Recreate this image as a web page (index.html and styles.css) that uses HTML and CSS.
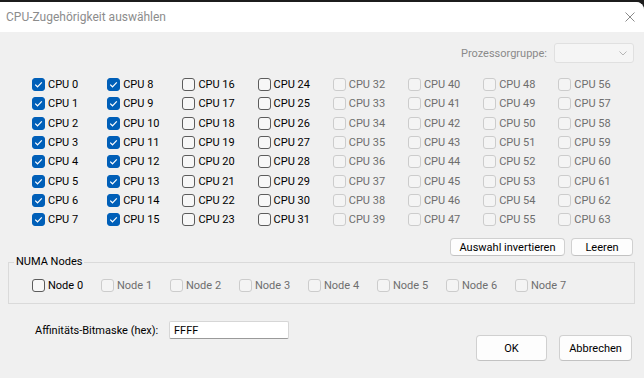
FILE: index.html
```html
<!DOCTYPE html>
<html lang="de">
  <head>
    <meta charset="UTF-8" />
    <title>CPU-Zugehörigkeit auswählen</title>
    <link rel="stylesheet" href="styles.css">
  </head>
  <body>
    <div class="dialog">
      <div class="titlebar">
        <span class="title">CPU-Zugehörigkeit auswählen</span>
        <svg class="close" width="10" height="10" viewBox="0 0 10 10">
          <path d="M0.5 0.5 L9.5 9.5 M9.5 0.5 L0.5 9.5" stroke="#8a8a8a" stroke-width="1" fill="none" />
        </svg>
      </div>

      <div class="content">
        <div class="group-row">
          <span class="muted">Prozessorgruppe:</span>
          <div class="select">
            <svg width="8" height="5" viewBox="0 0 8 5">
              <path d="M0.5 0.5 L4 4 L7.5 0.5" stroke="#b5b5b5" stroke-width="1" fill="none" />
            </svg>
          </div>
        </div>

        <div class="cpu-grid" id="cpu-grid"></div>

        <div class="actions">
          <button class="btn btn-invert">Auswahl invertieren</button>
          <button class="btn btn-clear">Leeren</button>
        </div>

        <fieldset class="numa">
          <legend>NUMA Nodes</legend>
          <div class="nodes" id="nodes"></div>
        </fieldset>

        <div class="bottom">
          <div class="mask">
            <label for="mask-input">Affinitäts-Bitmaske (hex):</label>
            <input type="text" id="mask-input" value="FFFF" />
          </div>
          <div class="dlg-buttons">
            <button class="btn btn-dlg">OK</button>
            <button class="btn btn-dlg btn-cancel">Abbrechen</button>
          </div>
        </div>
      </div>
    </div>

    <script>
      const checkSvg =
        '<svg width="13" height="13" viewBox="0 0 13 13"><path d="M3.2 6.6 L5.5 8.8 L9.8 4.3" stroke="#fff" stroke-width="1.2" fill="none" /></svg>';

      function checkbox(text, state) {
        const inner = state === "checked" ? checkSvg : "";
        return `<label class="cb ${state}"><span class="box">${inner}</span>${text}</label>`;
      }

      const grid = document.getElementById("cpu-grid");
      let html = "";
      for (let i = 0; i < 64; i++) {
        let state = "off";
        if (i < 16) state = "checked";
        else if (i >= 32) state = "disabled";
        html += checkbox("CPU " + i, state);
      }
      grid.innerHTML = html;

      const nodes = document.getElementById("nodes");
      let nodeHtml = "";
      for (let i = 0; i < 8; i++) {
        nodeHtml += checkbox("Node " + i, i === 0 ? "off" : "disabled");
      }
      nodes.innerHTML = nodeHtml;
    </script>
  </body>
</html>
```

FILE: styles.css
```css
* {
  margin: 0;
  padding: 0;
  box-sizing: border-box;
}

body {
  width: 644px;
  height: 378px;
  overflow: hidden;
  background-color: #1c1c1c;
  font-family: Roboto, "Liberation Sans", sans-serif;
  font-size: 11px;
  color: #000;
}

.dialog {
  margin-top: 2px;
  height: 376px;
  background-color: #f0f0f0;
  border-top-right-radius: 8px;
  overflow: hidden;
}

.titlebar {
  height: 30px;
  background-color: #fff;
  display: flex;
  align-items: center;
  justify-content: space-between;
  padding: 0 9px 0 6px;
}

.title {
  font-size: 12px;
  color: #8c8c8c;
}

.close {
  display: block;
}

.group-row {
  display: flex;
  justify-content: flex-end;
  align-items: center;
  gap: 7px;
  margin-top: 11px;
  padding-right: 10px;
}

.muted {
  color: #8a8a8a;
}

.select {
  width: 80px;
  height: 20px;
  background-color: #f5f5f5;
  border: 1px solid #e0e0e0;
  border-radius: 3px;
  display: flex;
  justify-content: flex-end;
  align-items: center;
  padding-right: 6px;
}

.select svg {
  display: block;
}

.cpu-grid {
  display: grid;
  grid-auto-flow: column;
  grid-template-rows: repeat(8, 19.3px);
  grid-template-columns: repeat(8, 75.2px);
  margin-top: 12px;
  padding-left: 32px;
}

.cb {
  display: flex;
  align-items: center;
  gap: 3px;
  white-space: nowrap;
  color: #000;
}

.box {
  width: 13px;
  height: 13px;
  border: 1px solid #5c5c5c;
  border-radius: 3px;
  background-color: #f7f7f7;
  flex-shrink: 0;
  position: relative;
}

.box svg {
  position: absolute;
  left: -1px;
  top: -1px;
}

.cb.checked .box {
  background-color: #005fb8;
  border-color: #005fb8;
}

.cb.disabled {
  color: #6e6e6e;
}

.cb.disabled .box {
  border-color: #cccccc;
  background-color: #f4f4f4;
}

.actions {
  display: flex;
  justify-content: flex-end;
  gap: 6px;
  margin-top: 9px;
  padding-right: 11px;
}

.btn {
  font-family: Roboto, "Liberation Sans", sans-serif;
  font-size: 11px;
  color: #000;
  background-color: #fdfdfd;
  border: 1px solid #d0d0d0;
  border-bottom-color: #c2c2c2;
  border-radius: 4px;
  height: 18px;
}

.btn-invert {
  width: 115px;
}

.btn-clear {
  width: 62px;
}

.numa {
  margin: 0 9px 0 8px;
  border: 1px solid #dadada;
  padding: 9px 0 9px 23px;
}

.numa legend {
  margin-left: -18px;
  padding: 0 2px;
  line-height: 12px;
}

.nodes {
  display: grid;
  grid-template-columns: repeat(8, 69px);
  grid-auto-rows: 17px;
}

.bottom {
  display: flex;
  justify-content: space-between;
  align-items: flex-start;
  padding: 0 12px 0 35px;
}

.mask {
  display: flex;
  align-items: center;
  margin-top: 17px;
}

.mask label {
  width: 134px;
}

.mask input {
  width: 120px;
  height: 18px;
  font-family: Roboto, "Liberation Sans", sans-serif;
  font-size: 11px;
  padding-left: 4px;
  background-color: #fff;
  border: 1px solid #d6d6d6;
  border-bottom-color: #9a9a9a;
  border-radius: 2px;
  outline: none;
}

.dlg-buttons {
  display: flex;
  gap: 12px;
  margin-top: 31px;
}

.btn-dlg {
  width: 71px;
  height: 26px;
}

.btn-cancel {
  width: 73px;
}
```
